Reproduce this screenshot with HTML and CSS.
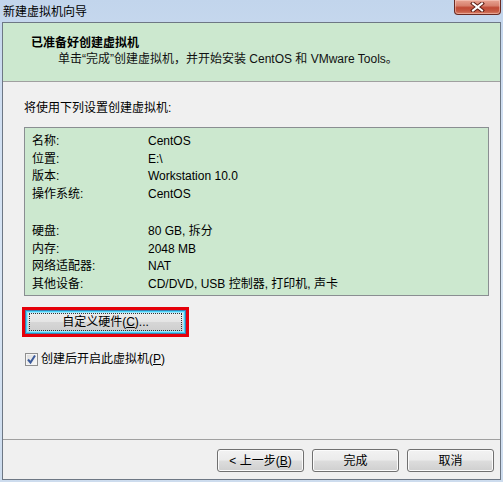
FILE: index.html
```html
<!DOCTYPE html>
<html lang="zh-CN">
<head>
<meta charset="utf-8">
<title>新建虚拟机向导</title>
<link rel="stylesheet" href="styles.css">
</head>
<body>
<div class="window">
  <div class="titlebar">
    <span class="title">新建虚拟机向导</span>
    <div class="close">
      <svg width="17" height="10" viewBox="0 0 17 10">
        <path d="M4 1.5 L13 8.5 M13 1.5 L4 8.5" stroke="#5b1d14" stroke-width="4" stroke-linecap="square"/>
        <path d="M4 1.5 L13 8.5 M13 1.5 L4 8.5" stroke="#ffffff" stroke-width="2" stroke-linecap="square"/>
      </svg>
    </div>
  </div>
  <div class="client">
    <div class="header">
      <div class="h-title">已准备好创建虚拟机</div>
      <div class="h-sub">单击“完成”创建虚拟机，并开始安装 CentOS 和 VMware Tools。</div>
    </div>
    <div class="body">
      <div class="intro">将使用下列设置创建虚拟机:</div>
      <div class="summary">
        <div class="group">
          <div class="row"><span class="k">名称:</span><span class="v">CentOS</span></div>
          <div class="row"><span class="k">位置:</span><span class="v">E:\</span></div>
          <div class="row"><span class="k">版本:</span><span class="v">Workstation 10.0</span></div>
          <div class="row"><span class="k">操作系统:</span><span class="v">CentOS</span></div>
        </div>
        <div class="group">
          <div class="row"><span class="k">硬盘:</span><span class="v">80 GB, 拆分</span></div>
          <div class="row"><span class="k">内存:</span><span class="v">2048 MB</span></div>
          <div class="row"><span class="k">网络适配器:</span><span class="v">NAT</span></div>
          <div class="row"><span class="k">其他设备:</span><span class="v">CD/DVD, USB 控制器, 打印机, 声卡</span></div>
        </div>
      </div>
      <div class="highlight">
        <button class="btn btn-custom"><span class="focus">自定义硬件(<u>C</u>)...</span></button>
      </div>
      <label class="check">
        <span class="box">
          <svg width="11" height="11" viewBox="0 0 11 11"><path d="M2 5.5 L4.5 8.5 L9 1.5" fill="none" stroke="#3b5a9a" stroke-width="2"/></svg>
        </span>
        <span>创建后开启此虚拟机(<u>P</u>)</span>
      </label>
    </div>
    <div class="spacer"></div>
    <div class="footer">
      <button class="btn">&lt; 上一步(<u>B</u>)</button>
      <button class="btn">完成</button>
      <button class="btn">取消</button>
    </div>
  </div>
</div>
</body>
</html>
```
FILE: styles.css
```css
html, body {
  margin: 0;
  padding: 0;
}
body {
  width: 503px;
  height: 482px;
  overflow: hidden;
  font-family: "Liberation Sans", "Noto Sans CJK SC", sans-serif;
  font-size: 12px;
  color: #000;
}
.window {
  width: 503px;
  height: 482px;
  box-sizing: border-box;
  display: flex;
  flex-direction: column;
  background: linear-gradient(180deg, #c2d5ec 0%, #cfdef1 20%, #d9e6f5 60%, #cddcee 100%);
}
.titlebar {
  height: 22px;
  display: flex;
  align-items: flex-start;
  padding-left: 3px;
  padding-right: 2px;
}
.title {
  align-self: center;
  line-height: 16px;
  margin-top: 1px;
}
.close {
  margin-left: auto;
  width: 45px;
  height: 14px;
  border: 1px solid #6a2a22;
  border-top: none;
  border-radius: 0 0 4px 4px;
  background: linear-gradient(180deg, #e8a493 0%, #d7816e 40%, #c04a35 55%, #c65b44 80%, #d9826a 100%);
  box-shadow: inset 0 0 0 1px rgba(255, 220, 210, 0.45);
  display: flex;
  align-items: center;
  justify-content: center;
}
.client {
  flex: 1;
  margin: 0 2px 2px 2px;
  border: 1px solid #6d7784;
  background: #f0f0f0;
  display: flex;
  flex-direction: column;
}
.header {
  background: #cce8cf;
  border-bottom: 1px solid #a0a0a0;
  padding-top: 12px;
  box-sizing: content-box;
  height: 46px;
}
.h-title {
  font-weight: bold;
  line-height: 16px;
  padding-left: 28px;
}
.h-sub {
  line-height: 16px;
  padding-left: 55px;
  color: #111;
}
.body {
  padding: 0 11px 0 21px;
  display: flex;
  flex-direction: column;
}
.intro {
  line-height: 16px;
  margin-top: 18px;
}
.summary {
  margin-top: 11px;
  border: 1px solid #8a8e92;
  background: #cce8cf;
  padding: 5px 0 2px 7px;
  display: flex;
  flex-direction: column;
  gap: 20px;
}
.row {
  display: flex;
  line-height: 17.5px;
  height: 17.5px;
}
.k {
  width: 116px;
}
.highlight {
  margin-top: 11px;
  margin-left: -2px;
  width: 167px;
  height: 30px;
  box-sizing: border-box;
  border: 3px solid #e5000a;
  display: flex;
}
.btn {
  font-family: inherit;
  font-size: 12px;
  color: #000;
  border: 1px solid #707070;
  border-radius: 3px;
  background: linear-gradient(180deg, #f2f2f2 0%, #ebebeb 48%, #dddddd 52%, #cfcfcf 100%);
  box-shadow: inset 0 0 0 1px #fbfbfb;
  padding: 0;
  margin: 0;
  line-height: 16px;
}
.btn-custom {
  flex: 1;
  border: 1px solid #3c7fb1;
  border-radius: 0;
  box-shadow: inset 0 0 0 1px #48d1f6, inset 0 0 0 2px #9de6fb;
  background: linear-gradient(180deg, #eaf6fd 0%, #e2f1fb 10%, #ececec 12%, #e4e4e4 50%, #d6d6d6 52%, #cfcfcf 90%, #9de6fb 92%);
  display: flex;
  align-items: center;
  justify-content: center;
}
.focus {
  display: flex;
  align-items: center;
  justify-content: center;
  width: 151px;
  height: 16px;
  outline: 1px dotted #333;
  outline-offset: 0;
}
.check {
  margin-top: 14px;
  display: flex;
  align-items: center;
  line-height: 16px;
  gap: 3px;
  margin-left: 1px;
}
.box {
  width: 11px;
  height: 11px;
  border: 1px solid #8f8f8f;
  background: linear-gradient(135deg, #dcdcdc, #fafafa);
  box-shadow: inset 0 0 0 1px #f4f4f4;
  display: flex;
  align-items: center;
  justify-content: center;
}
.box svg {
  display: block;
}
.spacer {
  flex: 1;
}
.footer {
  border-top: 1px solid #a0a0a0;
  display: flex;
  justify-content: flex-end;
  gap: 8px;
  padding: 9px 6px 7px 0;
}
.footer .btn {
  width: 87px;
  height: 23px;
}
```
